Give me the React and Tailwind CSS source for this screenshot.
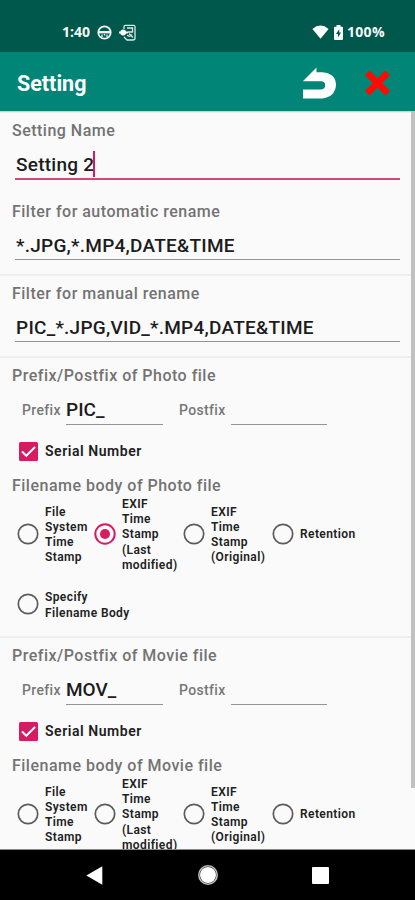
import React from "react";

function Label({ children, className = "h-[38px]" }) {
  return (
    <div className={`flex shrink-0 items-center whitespace-nowrap pl-[12px] text-[16px] font-medium tracking-[0.49px] text-[#737373] ${className}`}>
      {children}
    </div>
  );
}

function Field({ children, focused, className = "" }) {
  return (
    <div
      className={`ml-[15px] mr-[15px] flex shrink-0 items-center whitespace-nowrap pl-px pt-[3px] text-[19px] font-medium tracking-[0.25px] text-[#1c1c1c] ${
        focused ? "h-[31px] border-b-2 border-[#d24a7a]" : "h-[30px] border-b border-[#949494]"
      } ${className}`}
    >
      {children}
    </div>
  );
}

function Divider() {
  return <div className="h-[2px] shrink-0 bg-[#eeeeee]" />;
}

function Radio({ lines, checked, className = "" }) {
  return (
    <div className={`flex items-center ${className}`}>
      <svg className="mr-[6px] h-[22px] w-[22px] shrink-0" viewBox="0 0 22 22" fill="none">
        <circle cx="11" cy="11" r="9.7" stroke={checked ? "#d81b60" : "#5c5c5c"} strokeWidth={checked ? 2 : 1.7} />
        {checked && <circle cx="11" cy="11" r="5" fill="#d81b60" />}
      </svg>
      <div className="-mb-px whitespace-nowrap pt-[2px] text-[12px] font-semibold leading-[15.1px] tracking-[0.4px] text-[#202020]">
        {lines.map((line) => (
          <div key={line}>{line}</div>
        ))}
      </div>
    </div>
  );
}

function FileSection({ kind, prefix, selected }) {
  return (
    <section className="shrink-0">
      <Label className="h-[36px]">Prefix/Postfix of {kind} file</Label>
      <div className="flex h-[31px] items-stretch whitespace-nowrap text-[14px] font-medium tracking-[0.35px] text-[#777777]">
        <span className="ml-[22px] flex w-[44px] items-center pt-[2px]">Prefix</span>
        <span className="flex w-[97px] items-center border-b border-[#949494] pt-[3px] text-[19px] tracking-normal text-[#1c1c1c]">{prefix}</span>
        <span className="ml-[16px] flex w-[52px] items-center pt-[2px]">Postfix</span>
        <span className="w-[96px] border-b border-[#949494]" />
      </div>
      <div className="flex h-[52px] items-center pl-[19px]">
        <svg className="mr-[7px] h-[19px] w-[19px]" viewBox="0 0 19 19" fill="none">
          <rect width="19" height="19" rx="1.5" fill="#d81b60" />
          <path d="M3 9.5l4.3 4.3L16 5" stroke="#fff" strokeWidth="2" />
        </svg>
        <span className="text-[14px] font-semibold tracking-[0.55px] text-[#202020]">Serial Number</span>
      </div>
      <Label className="h-[17px]">Filename body of {kind} file</Label>
      <div className="flex h-[79px] items-center">
        <Radio className="ml-[17px] w-[77px]" lines={["File", "System", "Time", "Stamp"]} />
        <Radio className="w-[89px]" checked={selected} lines={["EXIF", "Time", "Stamp", "(Last", "modified)"]} />
        <Radio className="w-[89px]" lines={["EXIF", "Time", "Stamp", "(Original)"]} />
        <Radio lines={["Retention"]} />
      </div>
    </section>
  );
}

function StatusBar() {
  return (
    <div className="flex h-[52px] shrink-0 items-center bg-[#00574b] pt-[13px] font-['Open_Sans','Noto_Sans',sans-serif] text-[14px] font-bold text-[#f4f8f7]">
      <span className="mb-[2px] ml-[62px] w-[35px]">1:40</span>
      <svg className="h-[15px] w-[15px]" viewBox="0 0 15 15" fill="none" stroke="#eef5f4">
        <circle cx="7.5" cy="7.5" r="6.2" strokeWidth="1.8" />
        <path d="M2 7.2h11" strokeWidth="2.4" />
        <path d="M5 9.5v2.5M10 9.5v2.5M7.5 9v1.5" strokeWidth="1.3" />
      </svg>
      <svg className="ml-[7px] h-[17px] w-[18px]" viewBox="0 0 18 17" fill="none" stroke="#dce9e7" strokeWidth="1.3">
        <path d="M5 5V2.7Q5 1.3 6.5 1.3h8Q16 1.3 16 2.7V14q0 2-2 2H8l-3-3M8 4h5.5v4H9M13 10.5q-2 3-5 .8" />
        <circle cx="4.2" cy="8.5" r="2.9" fill="#fff" stroke="none" />
        <path d="M0 8.5h9" stroke="#fff" strokeWidth="2" />
        <path d="M10 9.5l4 4" />
      </svg>
      <svg className="mb-[2px] ml-[175px] h-[14px] w-[17px]" viewBox="0 0 17 14" fill="#fff">
        <path d="M.4 3.9Q8.5-2.8 16.6 3.9L8.5 13.8z" />
      </svg>
      <svg className="ml-[5px] h-[15px] w-[9px]" viewBox="0 0 9 15">
        <path d="M2.5 0h4v1.8H8q1 0 1 1V14q0 1-1 1H1q-1 0-1-1V2.8q0-1 1-1h1.5z" fill="#fff" />
        <path d="M5.3 4L2 9h2v3.5L7 7.5H5.2z" fill="#00574b" />
      </svg>
      <span className="mb-[2px] ml-[4px] tracking-[0.3px]">100%</span>
    </div>
  );
}

function AppBar() {
  return (
    <div className="flex h-[59px] shrink-0 items-center bg-[#008577]">
      <h1 className="ml-[17px] w-[285px] pt-[5px] text-[21.5px] font-bold text-white">Setting</h1>
      <svg className="mt-[3px] h-[32px] w-[34px]" viewBox="0 0 34 32" fill="#fff">
        <path d="M.8 14.2L14.5.5v4.8h6Q34 6.5 34 18.3 33 30 20 31.5H1v-9h18q4.2-.2 4.2-4.2t-4.2-4.1z" />
      </svg>
      <svg className="ml-[28px] mt-[2px] h-[28px] w-[27px]" viewBox="0 0 27 28">
        <path d="M3.3 3.8L23.7 24.2M23.7 3.8L3.3 24.2" stroke="#ff0a00" strokeWidth="6.6" />
      </svg>
    </div>
  );
}

function NavBar() {
  return (
    <div className="flex h-[50px] shrink-0 items-center bg-black">
      <svg className="ml-[86px] h-[19px] w-[17px]" viewBox="0 0 17 19">
        <path d="M.3 9.5L16.3.3v18.4z" fill="#fff" />
      </svg>
      <svg className="ml-[95px] h-[20px] w-[20px]" viewBox="0 0 20 20">
        <circle cx="10" cy="10" r="9.2" fill="none" stroke="#bdbdbd" strokeWidth="1.6" />
        <circle cx="10" cy="10" r="8" fill="#fff" />
      </svg>
      <span className="ml-[94px] h-[17px] w-[17px] rounded-[1px] bg-white" />
    </div>
  );
}

export default function App() {
  return (
    <div className="flex h-[900px] w-[415px] flex-col overflow-hidden bg-[#fafafa] font-[Roboto,sans-serif]">
      <StatusBar />
      <AppBar />
      <main className="relative flex h-[739px] shrink-0 flex-col overflow-hidden border-b border-[#8a8a8a]">
        <div className="absolute inset-x-0 top-0 h-[2px] bg-gradient-to-b from-[#b5c9c6] to-[#fafafa]" />
        <div className="absolute right-0 top-0 h-[677px] w-[4px] bg-[#c1c1c1]" />
        <Label className="h-[38px] pt-px">Setting Name</Label>
        <Field focused>
          Setting 2<span className="-ml-px mb-[2px] h-[26px] w-[2px] shrink-0 bg-[#d81b60]" />
        </Field>
        <Label className="mt-[12px] h-[38px] pt-px">Filter for automatic rename</Label>
        <Field className="mb-[14px]">*.JPG,*.MP4,DATE&amp;TIME</Field>
        <Divider />
        <Label className="h-[36px]">Filter for manual rename</Label>
        <Field className="mb-[14px]">PIC_*.JPG,VID_*.MP4,DATE&amp;TIME</Field>
        <Divider />
        <FileSection kind="Photo" prefix="PIC_" selected />
        <div className="flex h-[63px] shrink-0 items-center pb-[1px]">
          <Radio className="ml-[17px]" lines={["Specify", "Filename Body"]} />
        </div>
        <Divider />
        <FileSection kind="Movie" prefix="MOV_" />
      </main>
      <NavBar />
    </div>
  );
}
